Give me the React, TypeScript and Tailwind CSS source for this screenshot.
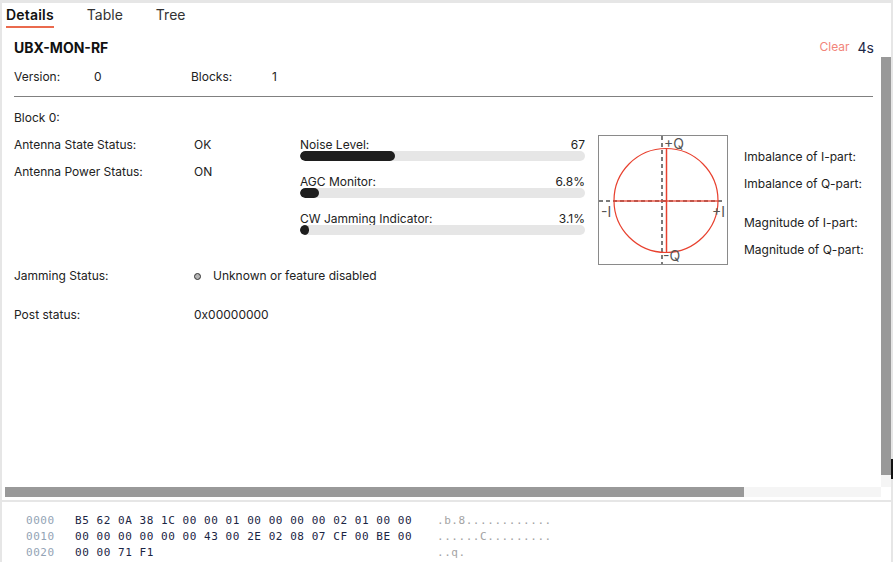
import React from "react";

const hexRows = [
  { off: "0000", bytes: "B5 62 0A 38 1C 00 00 01 00 00 00 00 02 01 00 00", ascii: ".b.8............" },
  { off: "0010", bytes: "00 00 00 00 00 00 43 00 2E 02 08 07 CF 00 BE 00", ascii: "......C........." },
  { off: "0020", bytes: "00 00 71 F1", ascii: "..q." },
];

function Bar({ label, value, pct }: { label: string; value: string; pct: number }) {
  return (
    <div className="flex flex-col">
      <div className="flex justify-between leading-[18px] h-[16px]">
        <span>{label}</span>
        <span>{value}</span>
      </div>
      <div className="-mt-[1px] h-[10px] w-full rounded-full bg-[#e6e6e6] overflow-hidden">
        <div className="h-full rounded-full bg-[#1e1e1e]" style={{ width: `${pct}%` }} />
      </div>
    </div>
  );
}

function IQPlot() {
  return (
    <svg width="128" height="128" viewBox="0 0 128 128">
      <line x1="63" y1="0" x2="63" y2="128" stroke="#7a7a7a" strokeWidth="2" strokeDasharray="4 3" />
      <line x1="0" y1="65" x2="124" y2="65" stroke="#7a7a7a" strokeWidth="2" strokeDasharray="4 3" />
      <circle cx="67" cy="64.5" r="52" fill="none" stroke="#e8412f" strokeWidth="1.2" />
      <line x1="67.5" y1="12.5" x2="67.5" y2="116.5" stroke="#e8412f" strokeWidth="1.5" />
      <line x1="15" y1="65" x2="119" y2="65" stroke="#e8412f" strokeWidth="1.5" opacity="0.85" />
      <text x="65" y="13" fontSize="14" fill="#555" fontFamily="Inter, sans-serif">+Q</text>
      <text x="64" y="125" fontSize="14" fill="#555" fontFamily="Inter, sans-serif">-Q</text>
      <text x="2" y="81" fontSize="14" fill="#555" fontFamily="Inter, sans-serif">-I</text>
      <text x="113" y="81" fontSize="14" fill="#555" fontFamily="Inter, sans-serif">+I</text>
    </svg>
  );
}

export default function App() {
  return (
    <div className="relative w-[895px] h-[562px] bg-white overflow-hidden text-[#222] font-['Inter',sans-serif] text-[12px]">
      <div className="w-[893px] h-[562px] border-t-[3px] border-x-[2px] border-[#e6e6e6] flex flex-col">
        {/* Tabs */}
        <div className="flex items-end pl-[4px] h-[25px] text-[14px]">
          <div className="flex flex-col">
            <span className="pt-[2px] leading-[20px] font-semibold text-[#111] tracking-[0.2px]">Details</span>
            <div className="mt-[1px] h-[2px] bg-[#ea6a4e]" />
          </div>
          <div className="flex flex-col ml-[33px]">
            <span className="pt-[2px] leading-[20px] text-[#333]">Table</span>
            <div className="mt-[1px] h-[2px]" />
          </div>
          <div className="flex flex-col ml-[33px]">
            <span className="pt-[2px] leading-[20px] text-[#333]">Tree</span>
            <div className="mt-[1px] h-[2px]" />
          </div>
        </div>

        {/* Header */}
        <div className="mt-[9px] h-[20px] flex items-center justify-between pl-[12px] pr-[17px]">
          <span className="text-[14px] font-bold text-[#111]">UBX-MON-RF</span>
          <div className="flex items-center gap-[8px]">
            <span className="text-[12px] text-[#f2857a]">Clear</span>
            <span className="text-[14px] text-[#1d2747]">4s</span>
          </div>
        </div>

        {/* Scroll area */}
        <div className="flex h-[430px]">
          <div className="w-[879px] pl-[12px] pr-[8px] pt-[12px]">
            <div className="flex leading-[16px] h-[16px]">
              <span className="w-[80px]">Version:</span>
              <span className="w-[97px]">0</span>
              <span className="w-[81px]">Blocks:</span>
              <span>1</span>
            </div>
            <div className="mt-[11px] h-[1px] bg-[#808080]" />
            <div className="mt-[13px] leading-[16px]">Block 0:</div>

            <div className="mt-[9px] flex items-start">
              <div className="w-[286px] pt-[2px] flex flex-col gap-[11px]">
                <div className="flex leading-[16px]">
                  <span className="w-[180px]">Antenna State Status:</span>
                  <span>OK</span>
                </div>
                <div className="flex leading-[16px]">
                  <span className="w-[180px]">Antenna Power Status:</span>
                  <span>ON</span>
                </div>
              </div>
              <div className="w-[285px] pt-[1px] flex flex-col gap-[12px]">
                <Bar label="Noise Level:" value="67" pct={33.5} />
                <Bar label="AGC Monitor:" value="6.8%" pct={6.8} />
                <Bar label="CW Jamming Indicator:" value="3.1%" pct={3.1} />
              </div>
              <div className="ml-[13px] w-[130px] h-[130px] border border-[#8a8a8a]">
                <IQPlot />
              </div>
              <div className="ml-[16px] pt-[14px] flex flex-col leading-[16px]">
                <span>Imbalance of I-part:</span>
                <span className="mt-[11px]">Imbalance of Q-part:</span>
                <span className="mt-[23px]">Magnitude of I-part:</span>
                <span className="mt-[11px]">Magnitude of Q-part:</span>
              </div>
            </div>

            <div className="mt-[3px] flex items-center leading-[16px]">
              <span className="w-[180px]">Jamming Status:</span>
              <span className="w-[7px] h-[7px] rounded-full bg-[#b5b5b5] border-[1.5px] border-[#333]" />
              <span className="ml-[12px]">Unknown or feature disabled</span>
            </div>
            <div className="mt-[23px] flex leading-[16px]">
              <span className="w-[180px]">Post status:</span>
              <span>0x00000000</span>
            </div>
          </div>
          <div className="w-[10px] flex flex-col">
            <div className="h-[418px] bg-[#999]" />
            <div className="flex-1 bg-[#f5f5f5]" />
          </div>
        </div>

        {/* Horizontal scrollbar */}
        <div className="ml-[3px] w-[876px] h-[10px] flex">
          <div className="w-[739px] bg-[#999]" />
          <div className="flex-1 bg-[#f5f5f5]" />
        </div>

        <div className="mt-[3px] h-[2px] bg-[#e6e6e6]" />

        {/* Hex dump */}
        <div className="pt-[11px] pl-[24px] font-['DejaVu_Sans_Mono',monospace] text-[11px] tracking-[0.55px] leading-[16px]">
          {hexRows.map((r) => (
            <div key={r.off} className="flex whitespace-pre">
              <span className="w-[49px] text-[#93a3b5]">{r.off}</span>
              <span className="w-[362px] text-[#1b2544]">{r.bytes}</span>
              <span className="text-[#a3a3a3]">{r.ascii}</span>
            </div>
          ))}
        </div>
      </div>
      <div className="absolute left-[891px] top-[459px] w-[2px] h-[20px] bg-[#111]" />
    </div>
  );
}
